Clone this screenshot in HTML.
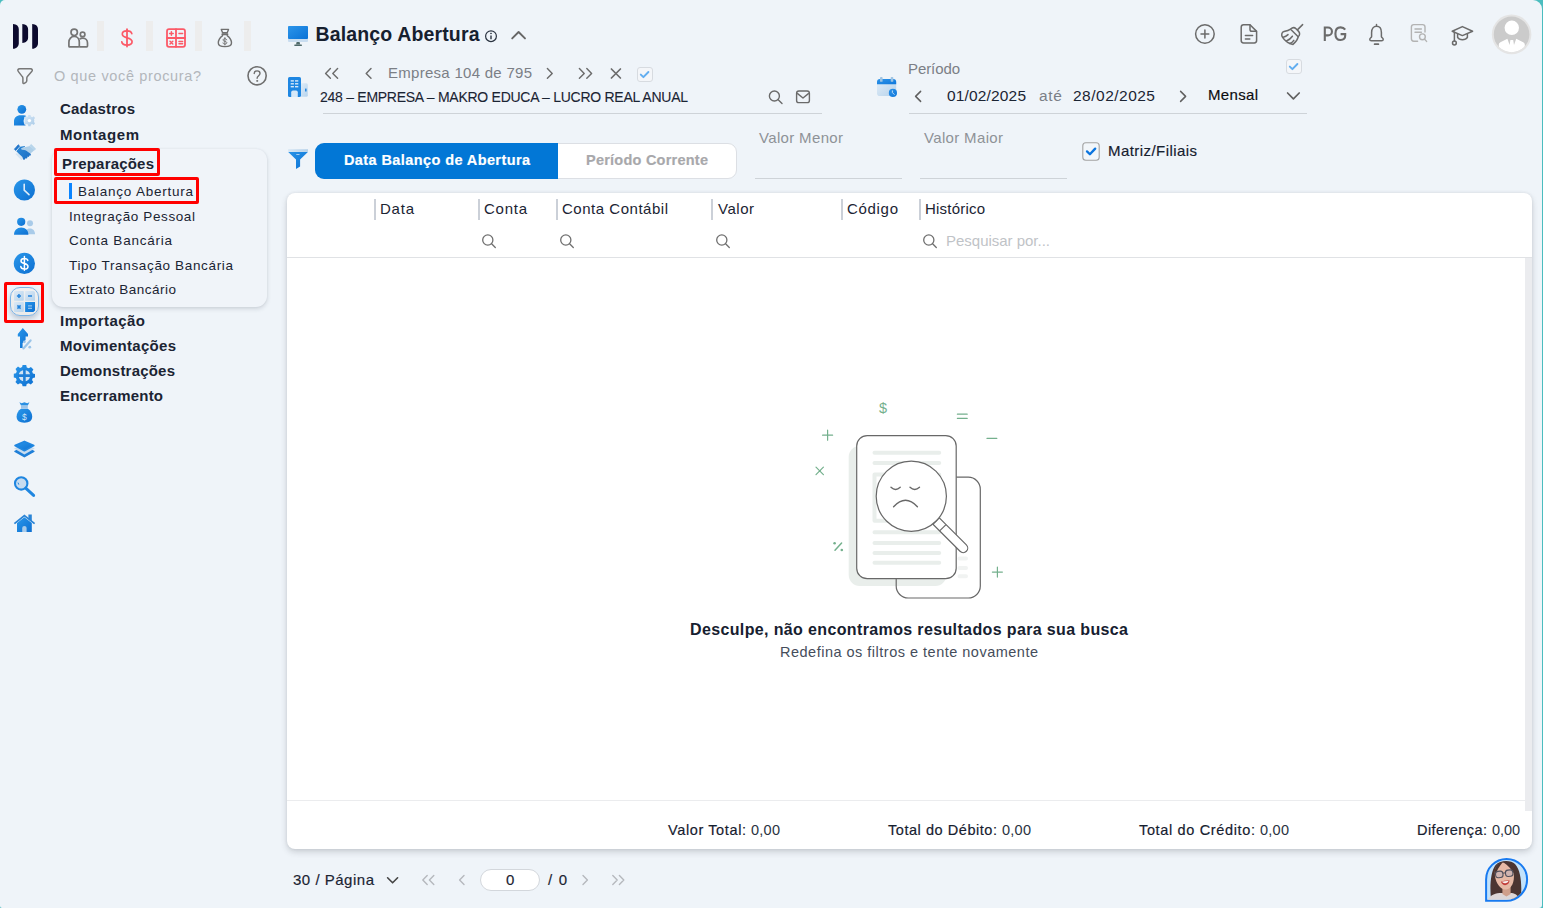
<!DOCTYPE html>
<html lang="pt-BR">
<head>
<meta charset="utf-8">
<title>Balanço Abertura</title>
<style>
*{box-sizing:border-box;margin:0;padding:0}
html,body{width:1543px;height:908px;overflow:hidden}
body{background:#4bbdbf;font-family:"Liberation Sans",sans-serif;color:#1b2433;position:relative}
#app{position:absolute;left:0;top:0;width:1542px;height:908px;background:#eff4f9;border-radius:5px 9px 3px 2px;overflow:hidden}
.a{position:absolute}
.t{position:absolute;white-space:nowrap;line-height:20px;height:20px}
svg{position:absolute;overflow:visible}
.sep{position:absolute;top:21px;width:7px;height:30px;background:#ededed}
.ul{position:absolute;height:1px;background:#ced3d8}
.red{position:absolute;border:3px solid #ff0000;border-radius:2px}
.vb{position:absolute;top:199px;width:2px;height:21px;background:#cbd0d8}
</style>
</head>
<body>
<div id="app">
<!-- top separators -->
<div class="sep" style="left:97px"></div>
<div class="sep" style="left:146px"></div>
<div class="sep" style="left:195px"></div>
<div class="sep" style="left:244px"></div>

<!-- submenu card -->
<div class="a" style="left:52px;top:149px;width:215px;height:157.5px;border-radius:11px;background:#f0f4f9;box-shadow:0 2px 4px rgba(50,60,80,.17),0 0 2px rgba(50,60,80,.08)"></div>
<div class="a" style="left:69px;top:183px;width:3px;height:16px;background:#0a84ff"></div>
<div class="red" style="left:54px;top:148px;width:106px;height:28px"></div>
<div class="red" style="left:54px;top:177px;width:145px;height:27px"></div>

<!-- selected sidebar icon bg + red frame -->
<div class="a" style="left:10px;top:287px;width:29px;height:29px;border-radius:10px;background:linear-gradient(180deg,#f0f1f2,#ebebea);border:1px solid #7db4e6;box-shadow:0 3px 5px rgba(60,80,110,.28)"></div>
<div class="red" style="left:4px;top:282px;width:40px;height:41px"></div>

<!-- underlines -->
<div class="ul" style="left:323px;top:113px;width:499px"></div>
<div class="ul" style="left:909px;top:113px;width:398px"></div>
<div class="ul" style="left:755px;top:178px;width:147px"></div>
<div class="ul" style="left:920px;top:178px;width:147px"></div>

<!-- segmented button -->
<div class="a" style="left:315px;top:143px;width:422px;height:36px;border-radius:9px;background:#fff;border:1px solid #dcdfe4"></div>
<div class="a" style="left:315px;top:143px;width:243px;height:36px;border-radius:9px 0 0 9px;background:#0277d6"></div>

<!-- checkbox matriz -->

<!-- small checkboxes -->
<div class="a" style="left:637px;top:67px;width:16px;height:15px;border-radius:3px;background:#f4f6f9;border:1px solid #d7dbe0"></div>
<div class="a" style="left:1286px;top:59px;width:16px;height:15px;border-radius:3px;background:#f4f6f9;border:1px solid #d7dbe0"></div>

<!-- table card -->
<div class="a" style="left:287px;top:193px;width:1245px;height:656px;border-radius:8px;background:#fff;box-shadow:0 3px 6px rgba(55,60,70,.2),0 0 3px rgba(55,60,70,.1)"></div>
<div class="a" style="left:287px;top:257px;width:1245px;height:1px;background:#e0e2e5"></div>
<div class="a" style="left:287px;top:800px;width:1238px;height:1px;background:#ebecee"></div>
<div class="a" style="left:1525px;top:258px;width:7px;height:553px;background:#ebecef"></div>
<div class="vb" style="left:374px"></div>
<div class="vb" style="left:478px"></div>
<div class="vb" style="left:556px"></div>
<div class="vb" style="left:711px"></div>
<div class="vb" style="left:841px"></div>
<div class="vb" style="left:919px"></div>

<!-- pager input -->
<div class="a" style="left:480px;top:869px;width:60px;height:22px;border-radius:11px;background:#fff;border:1px solid #d3d7dc"></div>
<!-- logo -->
<svg style="left:12px;top:23px" width="28" height="27" viewBox="12 23 28 27">
 <path fill="#0c0a2e" d="M13 23.9 C16.8 24 18.8 26.2 18.8 29.5 V43 C18.8 46.4 16.8 48.6 13 48.8 Z"/>
 <path fill="#0c0a2e" d="M22.3 23.9 C26 24 28.1 26.2 28.1 29.5 V37.5 C28.1 40.6 26 42.8 22.3 43 Z"/>
 <path fill="#0c0a2e" d="M32.2 23.9 C36 24 38 26.2 38 29.5 V43 C38 46.4 36 48.6 32.2 48.8 Z"/>
</svg>
<!-- people outline -->
<svg style="left:67px;top:27px" width="23" height="22" viewBox="67 27 23 22" fill="none" stroke="#757575" stroke-width="1.7" stroke-linejoin="round">
 <circle cx="74.2" cy="32.3" r="3.2"/>
 <path d="M69.1 46.9 H78.4 Q79.3 46.9 79.3 46 V42.2 C79.3 39 77.2 36.4 74.2 36.4 C71.2 36.4 68.9 39 68.9 42.2 V46 Q68.9 46.9 69.1 46.9 Z"/>
 <circle cx="82.6" cy="34.4" r="2.3"/>
 <path d="M79.3 46.9 H86.6 Q87.5 46.9 87.5 46 V43 C87.5 40.2 85.6 38.1 82.8 38.1 C81.5 38.1 80.4 38.5 79.6 39.2"/>
</svg>
<!-- red dollar -->
<svg style="left:118px;top:26px" width="18" height="24" viewBox="118 26 18 24" fill="none" stroke="#fb5a68" stroke-width="1.8" stroke-linecap="round">
 <path d="M127 29.2 V46.6"/>
 <path d="M131.8 33.6 C131.4 31.8 129.7 30.9 127 30.9 C124.2 30.9 122.3 32 122.3 34.1 C122.3 36.4 124.2 37.2 127 37.8 C130 38.5 132.1 39.4 132.1 41.8 C132.1 44 130 45.1 127 45.1 C124.1 45.1 122.1 44 121.8 41.9" stroke-width="1.7"/>
</svg>
<!-- red calc -->
<svg style="left:165px;top:27px" width="22" height="22" viewBox="165 27 22 22" fill="none" stroke="#fb5a68" stroke-width="1.8" stroke-linecap="round">
 <rect x="167" y="29.2" width="18" height="17.6" rx="2"/>
 <path d="M176 29.2 V46.8 M167 38 H185"/>
 <path d="M169.6 33.5 H173.2 M171.4 31.7 V35.3 M179 33.5 H182.6 M170 41.2 L172.8 44 M172.8 41.2 L170 44 M179 41.4 H182.6 M179 43.8 H182.6" stroke-width="1.5"/>
</svg>
<!-- money bag outline -->
<svg style="left:216px;top:27px" width="18" height="22" viewBox="216 27 18 22" fill="none" stroke="#707070" stroke-width="1.4" stroke-linejoin="round" stroke-linecap="round">
 <path d="M221.3 29.4 H228.5 L227.2 32.8 H222.6 Z"/>
 <path d="M222.4 34.2 H227.4" stroke-width="2"/>
 <path d="M222.6 35.6 C219.8 37.6 218.3 40.4 218.3 43 C218.3 45.6 220.2 46.6 224.9 46.6 C229.6 46.6 231.5 45.6 231.5 43 C231.5 40.4 230 37.6 227.2 35.6"/>
 <path d="M224.9 37.6 V45 M226.7 39.8 C226.5 39 225.8 38.7 224.9 38.7 C223.8 38.7 223.1 39.2 223.1 40 C223.1 40.9 223.9 41.1 224.9 41.3 C226 41.6 226.8 41.9 226.8 42.8 C226.8 43.6 226 44.1 224.9 44.1 C223.8 44.1 223.1 43.7 223 42.9" stroke-width="1"/>
</svg>
<!-- funnel -->
<svg style="left:16px;top:67px" width="18" height="18" viewBox="16 67 18 18" fill="none" stroke="#787878" stroke-width="1.5" stroke-linejoin="round">
 <path d="M19.8 68.8 H30.4 C32.4 68.8 32.9 70.2 31.7 71.6 L27.4 76.6 C26.9 77.2 26.8 77.6 26.8 78.4 V80.6 C26.8 81.4 26.5 81.9 25.9 82.3 L24.2 83.3 C23.5 83.7 22.9 83.3 22.9 82.5 V78.4 C22.9 77.6 22.8 77.2 22.3 76.6 L18.4 71.6 C17.3 70.2 17.8 68.8 19.8 68.8 Z"/>
</svg>
<!-- help -->
<svg style="left:246px;top:65px" width="22" height="22" viewBox="246 65 22 22" fill="none" stroke="#6f6f6f" stroke-width="1.6" stroke-linecap="round">
 <circle cx="257.1" cy="75.8" r="9.1"/>
 <path d="M254.2 73.5 C254.2 71.9 255.4 70.9 257.1 70.9 C258.8 70.9 260 71.9 260 73.5 C260 75.6 257.1 75.8 257.1 78.3" stroke-width="1.4"/>
 <circle cx="257.1" cy="80.9" r=".55" fill="#6f6f6f" stroke-width=".8"/>
</svg>
<svg width="0" height="0"><defs>
 <linearGradient id="bl" x1="0" y1="0" x2="1" y2="1"><stop offset="0" stop-color="#2a97ea"/><stop offset="1" stop-color="#0d6fd1"/></linearGradient>
 <linearGradient id="lb" x1="0" y1="0" x2="1" y2="1"><stop offset="0" stop-color="#dbe9f6"/><stop offset="1" stop-color="#a9cbe9"/></linearGradient>
</defs></svg>
<!-- 1 person + gear (cy 116) -->
<svg style="left:12px;top:103px" width="26" height="26" viewBox="12 103 26 26">
 <circle cx="21.8" cy="109.3" r="4.4" fill="url(#bl)"/>
 <path d="M14 125.6 V121.6 C14 117.6 16.6 115.2 20.6 115.2 H23.4 C24.6 115.2 25.6 115.4 26.4 115.9 C24.6 117.4 23.6 119.2 23.6 121 C23.6 122.8 24.4 124.4 25.8 125.6 Z" fill="url(#bl)"/>
 <g transform="translate(29.4 120.6)">
  <path fill="url(#lb)" d="M-1.1 -5.6 H1.1 L1.5 -4 L2.9 -3.4 L4.3 -4.3 L5.6 -2.6 L4.6 -1.3 L4.9 0 L4.6 1.3 L5.6 2.6 L4.3 4.3 L2.9 3.4 L1.5 4 L1.1 5.6 H-1.1 L-1.5 4 L-2.9 3.4 L-4.3 4.3 L-5.6 2.6 L-4.6 1.3 L-4.9 0 L-4.6 -1.3 L-5.6 -2.6 L-4.3 -4.3 L-2.9 -3.4 L-1.5 -4 Z"/>
  <circle r="1.7" fill="#fff"/>
 </g>
</svg>
<!-- 2 handshake (cy 153) -->
<svg style="left:12px;top:143px" width="26" height="20" viewBox="12 143 26 20">
 <defs><linearGradient id="hs" x1="0" y1="0" x2="1" y2="1"><stop offset="0" stop-color="#2f8bd8"/><stop offset="1" stop-color="#1a6cc2"/></linearGradient></defs>
 <path d="M16.4 154 L21.6 159.2 M18.2 153.4 L23 158.2" stroke="#d3e3f1" stroke-width="1.5" stroke-linecap="round"/>
 <path d="M21.4 148 L25.5 146.9 L30 146.1 L34.5 149.9 L31.8 152.6 L30 153.4 L25.5 150.4 L21.4 149.2 Z" fill="#aecfe9"/>
 <path d="M30 145.6 L31.2 144.5 L35.6 148.9 L34.4 150 Z" fill="#b5d3ea" stroke="#b5d3ea" stroke-width=".8" stroke-linejoin="round"/>
 <path d="M14.4 149.2 L18.3 144.8 L19.6 146 L15.7 150.4 Z" fill="#1f74ca" stroke="#1f74ca" stroke-width=".8" stroke-linejoin="round"/>
 <path d="M16.3 151.2 L20 146.7 L24.8 146 L25 146.8 L21.2 148.2 L21.6 149.6 L25.6 150.2 L31 154 L30.4 155.7 L29.4 155.4 L28.9 156.9 L27.7 156.6 L27 158.6 L25.6 158.2 L24.2 160 L23.2 159.6 L22.4 157 Z" fill="url(#hs)"/>
</svg>
<!-- 3 clock (cy 190) -->
<svg style="left:13px;top:179px" width="23" height="23" viewBox="13 179 23 23">
 <circle cx="24.4" cy="190" r="10.6" fill="url(#bl)"/>
 <path d="M24.2 184.2 V190.2 L29 194.6" fill="none" stroke="#dcebf8" stroke-width="1.6" stroke-linecap="round" stroke-linejoin="round"/>
</svg>
<!-- 4 users (cy 227) -->
<svg style="left:12px;top:216px" width="26" height="22" viewBox="12 216 26 22">
 <circle cx="30" cy="223.2" r="3" fill="#a9cbe9"/>
 <path d="M26.4 234.2 H35 C35 230.6 33 228.4 30 228.4 C28.6 228.4 27.4 228.8 26.6 229.6 Z" fill="#a9cbe9"/>
 <circle cx="21.2" cy="221.8" r="4.1" fill="url(#bl)"/>
 <path d="M14 234.8 C14 230.2 17 227.4 21.2 227.4 C25.4 227.4 28.4 230.2 28.4 234.8 Z" fill="url(#bl)"/>
</svg>
<!-- 5 dollar circle (cy 263.5) -->
<svg style="left:13px;top:252px" width="23" height="23" viewBox="13 252 23 23">
 <circle cx="24.4" cy="263.4" r="10.6" fill="url(#bl)"/>
 <path d="M24.4 256.6 V270.2 M27.8 260.4 C27.5 259 26.2 258.4 24.4 258.4 C22.4 258.4 21 259.3 21 260.9 C21 262.6 22.4 263.1 24.4 263.5 C26.5 264 28 264.7 28 266.4 C28 268.1 26.5 269 24.4 269 C22.4 269 21 268.2 20.8 266.6" fill="none" stroke="#fff" stroke-width="1.5" stroke-linecap="round"/>
</svg>
<!-- 6 calc (cy 301.5) -->
<svg style="left:13px;top:290px" width="23" height="23" viewBox="13 290 23 23">
 <defs><linearGradient id="cl" x1="0" y1="0" x2="1" y2="1"><stop offset="0" stop-color="#dde9f5"/><stop offset="1" stop-color="#b5d3ec"/></linearGradient></defs>
 <rect x="14" y="291" width="9.8" height="9.7" rx=".8" fill="url(#cl)"/>
 <path d="M25.1 291 H33 Q35 291 35 293 V300.7 H25.1 Z" fill="url(#cl)"/>
 <rect x="14" y="302" width="9.8" height="10" rx=".8" fill="url(#cl)"/>
 <path d="M25.1 302 H35 V310.4 L33.4 312 H25.1 Z" fill="url(#bl)"/>
 <path d="M16.9 296 H21 M18.95 294 V298 M28 296 H32 M17.4 305.4 L20.6 308.6 M20.6 305.4 L17.4 308.6" stroke="#2584dc" stroke-width="1.5" fill="none"/>
 <path d="M28 305.8 H32 M28 308.3 H32" stroke="#8fc0ec" stroke-width="1.3" fill="none"/>
</svg>
<!-- 7 arrow percent (cy 339) -->
<svg style="left:15px;top:327px" width="18" height="23" viewBox="15 327 18 23">
 <path d="M22.8 328 L28 334 L28 336.4 L25.6 336.4 L25.6 340 L22.6 343 L22.6 348 H20 V336.4 H17.8 V334 Z" fill="url(#bl)"/>
 <path d="M30.6 340.4 L23.4 348.4" stroke="#9cc5e9" stroke-width="2.2" stroke-linecap="round"/>
 <circle cx="24.4" cy="341.8" r="1.4" fill="#9cc5e9"/><circle cx="29.8" cy="347.2" r="1.4" fill="#9cc5e9"/>
</svg>
<!-- 8 gear plus (cy 376) -->
<svg style="left:13px;top:364px" width="23" height="23" viewBox="13 364 23 23">
 <g transform="translate(24.4 375.6)">
  <path fill="url(#bl)" d="M-1.8 -10.6 H1.8 L2.4 -8.2 L4.4 -7.4 L6.5 -8.7 L9 -6.2 L7.7 -4.1 L8.5 -2.1 L10.6 -1.6 V1.8 L8.4 2.4 L7.6 4.4 L8.9 6.5 L6.4 9 L4.3 7.7 L2.3 8.5 L1.8 10.6 H-1.8 L-2.4 8.4 L-4.4 7.6 L-6.5 8.9 L-9 6.4 L-7.7 4.3 L-8.5 2.3 L-10.6 1.8 V-1.8 L-8.4 -2.4 L-7.6 -4.4 L-8.9 -6.5 L-6.4 -9 L-4.3 -7.7 L-2.3 -8.5 Z"/>
  <circle r="5.7" fill="#d2e3f3"/>
  <path d="M0 -6.4 V6.4 M-6.4 0 H6.4" stroke="#1f7fd8" stroke-width="2.6"/>
 </g>
</svg>
<!-- 9 money bag (cy 412) -->
<svg style="left:15px;top:401px" width="19" height="23" viewBox="15 400 19 23">
 <path d="M19.4 401.2 L21.6 402.2 L24.4 401.2 L27.2 402.2 L29.4 401.2 L27.8 404.6 H21 Z" fill="#2a8fe2"/>
 <rect x="21" y="405" width="6.8" height="2.4" fill="#9ec4e8"/>
 <path d="M21 407.8 H27.8 C30.6 409.6 32.2 412.6 32.2 415.6 C32.2 419.8 29.4 421.8 24.4 421.8 C19.4 421.8 16.6 419.8 16.6 415.6 C16.6 412.6 18.2 409.6 21 407.8 Z" fill="url(#bl)"/>
 <text x="24.4" y="418.6" font-size="8.5" text-anchor="middle" fill="#cfe4f7" font-family="Liberation Sans, sans-serif">$</text>
</svg>
<!-- 10 layers (cy 449) -->
<svg style="left:13px;top:439px" width="23" height="20" viewBox="13 439 23 20">
 <path d="M15 451.4 L24.4 447.2 L33.8 451.4 L24.4 456.6 Z" fill="#1f7fd8" stroke="#1f7fd8" stroke-width="1.6" stroke-linejoin="round"/>
 <path d="M14 448.6 L24.4 443.8 L34.8 448.6 L24.4 454.6 Z" fill="#c8dcef"/>
 <path d="M15 445.6 L24.4 441.4 L33.8 445.6 L24.4 450.8 Z" fill="url(#bl)" stroke="#1f86e0" stroke-width="1.6" stroke-linejoin="round"/>
</svg>
<!-- 11 search (cy 486) -->
<svg style="left:13px;top:475px" width="23" height="23" viewBox="13 475 23 23">
 <circle cx="21.2" cy="483.4" r="6.2" fill="#c8dcef" stroke="#1f86e0" stroke-width="2.1"/>
 <path d="M26 488.4 L33.6 495.4" stroke="#1f86e0" stroke-width="3" stroke-linecap="round"/>
 <path d="M18 482.6 L18.8 484.6" stroke="#1f86e0" stroke-width="1"/>
</svg>
<!-- 12 home (cy 523) -->
<svg style="left:13px;top:513px" width="23" height="20" viewBox="13 513 23 20">
 <path d="M17 523 L24.4 517.2 L31.8 523 V532 H17 Z" fill="url(#bl)"/>
 <path d="M28.4 514.6 H31.8 V521.4 L28.4 518.8 Z" fill="#2a84d6"/><path d="M14.4 523.6 L24.4 515.6 L34.6 523.6" fill="none" stroke="#2a84d6" stroke-width="1.8" stroke-linejoin="miter"/>
 <path d="M22.2 532 V528 Q22.2 526 24.4 526 Q26.6 526 26.6 528 V532 Z" fill="#a9cbe9"/>
</svg>
<!-- monitor icon -->
<svg style="left:287px;top:25px" width="22" height="22" viewBox="287 25 22 22">
 <defs><linearGradient id="mn" x1="0" y1="0" x2="1" y2="1"><stop offset="0" stop-color="#2c95ea"/><stop offset="1" stop-color="#0a72d6"/></linearGradient></defs>
 <path d="M296.6 42 H299.6 L300.2 44.6 H296 Z" fill="#506a6a"/>
 <rect x="294.2" y="44.4" width="7.8" height="1.5" rx=".7" fill="#506a6a"/>
 <rect x="288" y="26" width="20" height="16" rx="1" fill="#c9ddf0"/>
 <rect x="288" y="26" width="20" height="13" rx="1" fill="url(#mn)"/>
</svg>
<!-- info i -->
<svg style="left:484px;top:29px" width="14" height="14" viewBox="484 29 14 14" fill="none" stroke="#2a3340" stroke-width="1.2">
 <circle cx="491" cy="36.2" r="5.4"/>
 <path d="M491 35.4 V39.2" stroke-width="1.4"/><circle cx="491" cy="33.4" r=".5" fill="#2a3340" stroke-width=".7"/>
</svg>
<!-- chevron up -->
<svg style="left:510px;top:29px" width="18" height="12" viewBox="510 29 18 12" fill="none" stroke="#666" stroke-width="1.9" stroke-linecap="round" stroke-linejoin="round">
 <path d="M512.2 38.4 L518.6 32 L525 38.4"/>
</svg>
<!-- building icon -->
<svg style="left:287px;top:75px" width="22" height="24" viewBox="287 75 22 24">
 <defs><linearGradient id="sb" x1="0" y1="0" x2="1" y2="1"><stop offset="0" stop-color="#e3eef8"/><stop offset="1" stop-color="#b4d2ed"/></linearGradient></defs><rect x="300" y="83.2" width="7.8" height="13.6" rx="1.5" fill="url(#sb)"/>
 <rect x="305" y="88.6" width="1.6" height="3" rx=".5" fill="#2b8ae0"/>
 <rect x="288" y="77" width="13" height="20" rx="1.6" fill="#1e86e2"/>
 <g fill="#d6e8f8"><rect x="290.7" y="80.2" width="3.2" height="1.4"/><rect x="295" y="80.2" width="3.3" height="1.4"/>
 <rect x="290.7" y="83.1" width="3.2" height="1.4"/><rect x="295" y="83.1" width="3.3" height="1.4"/>
 <rect x="290.7" y="86" width="3.2" height="1.4"/><rect x="295" y="86" width="3.3" height="1.4"/>
 <path d="M291.2 97 V92.2 Q291.2 90.4 293 90.4 H296 Q297.8 90.4 297.8 92.2 V97 Z"/></g>
</svg>
<!-- nav chevrons row y=73 -->
<svg style="left:320px;top:66px" width="310" height="15" viewBox="320 66 310 15" fill="none" stroke="#6c6c6c" stroke-width="1.45" stroke-linecap="round" stroke-linejoin="round">
 <path d="M330.4 68.6 L325.6 73.4 L330.4 78.2 M337.6 68.6 L332.8 73.4 L337.6 78.2"/>
 <path d="M371 68.6 L366.2 73.4 L371 78.2"/>
 <path d="M547.4 68.6 L552.2 73.4 L547.4 78.2"/>
 <path d="M579.4 68.6 L584.2 73.4 L579.4 78.2 M586.8 68.6 L591.6 73.4 L586.8 78.2"/>
 <path d="M611.4 69 L620.4 78 M620.4 69 L611.4 78" stroke-width="1.7"/>
</svg>
<!-- check in small checkbox 1 -->
<svg style="left:637px;top:67px" width="15" height="15" viewBox="0 0 15 15" fill="none" stroke="#62aef0" stroke-width="1.9" stroke-linecap="round" stroke-linejoin="round"><path d="M3.8 7.6 L6.4 10.2 L11.4 5"/></svg>
<svg style="left:1286px;top:59px" width="15" height="15" viewBox="0 0 15 15" fill="none" stroke="#62aef0" stroke-width="1.9" stroke-linecap="round" stroke-linejoin="round"><path d="M3.8 7.6 L6.4 10.2 L11.4 5"/></svg>
<!-- search + mail in company field -->
<svg style="left:766px;top:88px" width="48" height="18" viewBox="766 88 48 18" fill="none" stroke="#6a6a6a" stroke-width="1.4" stroke-linecap="round" stroke-linejoin="round">
 <circle cx="774.4" cy="96" r="5"/><path d="M778.2 99.8 L782 103.4"/>
 <rect x="796.6" y="91" width="12.8" height="11.6" rx="2.2"/><path d="M797.6 93.6 L803 98 L808.4 93.6"/>
</svg>
<!-- calendar icon -->
<svg style="left:875px;top:75px" width="24" height="24" viewBox="875 75 24 24">
 <defs><linearGradient id="cg" x1="0" y1="0" x2="1" y2="1"><stop offset="0" stop-color="#e4eef8"/><stop offset="1" stop-color="#b5d2eb"/></linearGradient>
 <linearGradient id="ch" x1="0" y1="0" x2="1" y2="1"><stop offset="0" stop-color="#2e93e8"/><stop offset="1" stop-color="#0f78dc"/></linearGradient></defs>
 <rect x="877" y="79" width="19.2" height="17" rx="2.8" fill="url(#cg)"/>
 <path d="M877 84.2 V82 Q877 79 880 79 H893.2 Q896.2 79 896.2 82 V84.2 Z" fill="url(#ch)"/>
 <rect x="880" y="76.9" width="2.6" height="4.9" rx=".9" fill="#9dc3e3"/><rect x="890.7" y="76.9" width="2.6" height="4.9" rx=".9" fill="#9dc3e3"/>
 <circle cx="892.9" cy="92.9" r="4.1" fill="url(#ch)"/>
 <path d="M892.4 90.8 V92.6 L894.2 94.4" fill="none" stroke="#cfe3f6" stroke-width=".9" stroke-linecap="round"/>
</svg>
<!-- period chevrons -->
<svg style="left:910px;top:88px" width="392" height="16" viewBox="910 88 392 16" fill="none" stroke="#606060" stroke-width="1.5" stroke-linecap="round" stroke-linejoin="round">
 <path d="M920.6 91.4 L915.6 96.4 L920.6 101.4"/>
 <path d="M1180.6 91.4 L1185.6 96.4 L1180.6 101.4"/>
 <path d="M1287.6 93 L1293.4 98.8 L1299.2 93" stroke-width="1.7"/>
</svg>
<!-- plus circle -->
<svg style="left:1193px;top:23px" width="24" height="24" viewBox="1193 23 24 24" fill="none" stroke="#6b6b6b" stroke-width="1.5" stroke-linecap="round">
 <circle cx="1204.9" cy="34" r="9.3"/><path d="M1201 34 H1208.8 M1204.9 30.1 V37.9"/>
</svg>
<!-- doc -->
<svg style="left:1238px;top:23px" width="22" height="24" viewBox="1238 23 22 24" fill="none" stroke="#6b6b6b" stroke-width="1.5" stroke-linecap="round" stroke-linejoin="round">
 <path d="M1243.6 24.8 H1250 L1256.6 31.4 V40.6 Q1256.6 43 1254.2 43 H1243.6 Q1241.2 43 1241.2 40.6 V27.2 Q1241.2 24.8 1243.6 24.8 Z"/>
 <path d="M1250 25 V29.4 Q1250 31.2 1251.8 31.2 H1256.4"/>
 <path d="M1245.4 35.6 H1252.6 M1245.4 39 H1249.8"/>
</svg>
<!-- broom -->
<svg style="left:1279px;top:22px" width="26" height="26" viewBox="1279 22 26 26" fill="none" stroke="#6b6b6b" stroke-width="1.5" stroke-linecap="round" stroke-linejoin="round">
 <path d="M1297.6 29.6 L1302.6 24.6"/>
 <path d="M1290.6 29.2 C1292.4 27.4 1294.6 27.4 1296 28.8 L1298.6 31.4 C1300 32.8 1300 35 1298.2 36.8 Z"/>
 <path d="M1290.6 29.2 C1288.6 30.6 1286 31.2 1284 31.6 C1281.6 32.2 1281 35 1282.6 37.4 C1285 41 1288.6 43.6 1293 44.4 C1295.4 42.4 1297.6 39.6 1298.2 36.8"/>
 <path d="M1283.2 37.2 C1285 36.8 1286.8 35.8 1288 34.6 M1286.4 41 C1289 40 1291 38.2 1292.4 36.2 M1290 43.4 C1291.6 42.8 1293 41.6 1293.8 40.4"/>
</svg>
<!-- PG -->
<svg style="left:1320px;top:24px" width="30" height="20" viewBox="1320 24 30 20" fill="none" stroke="#6b6b6b" stroke-width="2.1" stroke-linejoin="miter">
 <path d="M1324.8 41 V27.5 H1328 A3.95 3.95 0 0 1 1328 35.4 H1324.8"/>
 <path d="M1345.2 29.6 C1344.2 28.2 1342.6 27.4 1340.6 27.4 C1337.4 27.4 1335.4 29.8 1335.4 33.7 C1335.4 37.6 1337.4 40 1340.6 40 C1343.6 40 1345.2 38.4 1345.2 35.6 V34.1 H1340.6"/>
</svg>
<!-- bell -->
<svg style="left:1365px;top:22px" width="24" height="26" viewBox="1365 22 24 26" fill="none" stroke="#6b6b6b" stroke-width="1.5" stroke-linecap="round" stroke-linejoin="round">
 <path d="M1376.5 24.6 V26 M1371.6 32.4 C1371.6 28.6 1373.6 26.2 1376.5 26.2 C1379.4 26.2 1381.4 28.6 1381.4 32.4 V36.4 C1381.4 37.6 1383.2 38 1383.2 39.4 Q1383.2 40.8 1381.6 40.8 H1371.4 Q1369.8 40.8 1369.8 39.4 C1369.8 38 1371.6 37.6 1371.6 36.4 Z"/>
 <path d="M1374.6 44.2 H1378.4" stroke-width="1.7"/>
</svg>
<!-- doc search (light) -->
<svg style="left:1408px;top:22px" width="22" height="24" viewBox="1408 22 22 24" fill="none" stroke="#b3b3b3" stroke-width="1.4" stroke-linecap="round" stroke-linejoin="round">
 <path d="M1417.6 41.2 H1413.8 Q1411.4 41.2 1411.4 38.8 V27 Q1411.4 24.6 1413.8 24.6 H1422.6 Q1425 24.6 1425 27 V32"/>
 <path d="M1415 29 H1421.4 M1415 32.2 H1421.4"/>
 <circle cx="1422.4" cy="36.8" r="2.9"/><path d="M1424.6 39.2 L1426.6 41.4"/>
</svg>
<!-- grad cap -->
<svg style="left:1449px;top:23px" width="26" height="24" viewBox="1449 23 26 24" fill="none" stroke="#6b6b6b" stroke-width="1.5" stroke-linecap="round" stroke-linejoin="round">
 <path d="M1452.2 31.2 L1462.4 26.6 L1472.6 31.2 L1462.4 35.6 Z"/>
 <path d="M1457.6 34 V37.4 C1458.6 39 1460.4 39.8 1462.4 39.8 C1464.4 39.8 1466.4 39 1467.4 37.4 V34"/>
 <path d="M1454.4 32.2 V41"/><circle cx="1454.4" cy="43" r="1.9"/>
</svg>
<!-- user avatar grey -->
<svg style="left:1491px;top:14px" width="42" height="42" viewBox="1491 14 42 42">
 <defs><clipPath id="uc"><circle cx="1511.6" cy="34.4" r="17.8"/></clipPath></defs>
 <circle cx="1511.6" cy="34.4" r="19.8" fill="#e4e4e4"/>
 <circle cx="1511.6" cy="34.4" r="17.8" fill="#cbcbcb"/>
 <g clip-path="url(#uc)" fill="#fff">
  <circle cx="1511.8" cy="27.8" r="7.2"/>
  <path d="M1498.8 53 V44.6 Q1498.8 43 1500.4 42.2 L1507.4 38.8 L1509.6 45 L1510.4 40 H1513.2 L1514 45 L1516.2 38.8 L1523.2 42.2 Q1524.8 43 1524.8 44.6 V53 Z"/>
 </g>
</svg>
<!-- funnel blue -->
<svg style="left:287px;top:148px" width="22" height="24" viewBox="287 148 22 24">
 <defs><linearGradient id="fb" x1="0" y1="0" x2="1" y2="0"><stop offset="0" stop-color="#d9e7f4"/><stop offset="1" stop-color="#b3d0e9"/></linearGradient>
 <linearGradient id="fd" x1="0" y1="0" x2="1" y2="1"><stop offset="0" stop-color="#2a93e6"/><stop offset="1" stop-color="#0b73d6"/></linearGradient></defs>
 <path d="M288.1 149.2 H308 V151.9 H288.1 Z" fill="url(#fb)"/>
 <path d="M288.2 152.1 H307.9 L300.1 159.6 V166.5 L296 168.9 V159.6 Z" fill="url(#fd)"/>
 <rect x="296.2" y="153.9" width="3.4" height=".9" rx=".4" fill="#cfe3f6"/>
</svg>
<!-- matriz check -->
<svg style="left:1081px;top:141px" width="20" height="21" viewBox="1081 141 20 21" fill="none" stroke-linecap="round" stroke-linejoin="round">
 <rect x="1082.8" y="142.8" width="16.4" height="17.4" rx="3" fill="#f2f6fa" stroke="#a3a3a3" stroke-width="1.1"/>
 <path d="M1087 151.4 L1089.9 154.3 L1095.2 148.6" stroke="#0b74de" stroke-width="2.3"/>
</svg>
<!-- table search icons -->
<svg style="left:480px;top:232px" width="460" height="18" viewBox="480 232 460 18" fill="none" stroke="#6f6f6f" stroke-width="1.3" stroke-linecap="round">
 <circle cx="487.8" cy="240" r="5.1"/><path d="M491.6 243.8 L495.3 247.5"/>
 <circle cx="565.8" cy="240" r="5.1"/><path d="M569.6 243.8 L573.3 247.5"/>
 <circle cx="721.8" cy="240" r="5.1"/><path d="M725.6 243.8 L729.3 247.5"/>
 <circle cx="928.8" cy="240" r="5.1"/><path d="M932.6 243.8 L936.3 247.5"/>
</svg>
<!-- pager -->
<svg style="left:384px;top:872px" width="250" height="16" viewBox="384 872 250 16" fill="none" stroke-width="1.4" stroke-linecap="round" stroke-linejoin="round">
 <path d="M387.6 877.8 L392.6 882.8 L397.6 877.8" stroke="#444" stroke-width="1.6"/>
 <g stroke="#b5b8bd"><path d="M427.2 875.6 L422.8 880 L427.2 884.4 M433.8 875.6 L429.4 880 L433.8 884.4"/>
 <path d="M464 875.6 L459.6 880 L464 884.4"/>
 <path d="M583 875.6 L587.4 880 L583 884.4"/>
 <path d="M612.8 875.6 L617.2 880 L612.8 884.4 M619.4 875.6 L623.8 880 L619.4 884.4"/></g>
</svg>
<!-- empty state illustration -->
<svg style="left:800px;top:395px" width="220" height="215" viewBox="800 395 220 215" fill="none">
 <path d="M956.2 477.2 H968.3 A12 12 0 0 1 980.3 489.2 V586 A12 12 0 0 1 968.3 598 H908.2 A12 12 0 0 1 896.2 586 V578.7 Z" fill="#fff"/>
 <rect x="848.7" y="446" width="97.7" height="140" rx="11" fill="#e9eeeb"/>
 <path d="M956.2 477.2 H968.3 A12 12 0 0 1 980.3 489.2 V586 A12 12 0 0 1 968.3 598 H908.2 A12 12 0 0 1 896.2 586 V578.7" stroke="#686868" stroke-width="1.2"/>
 <g stroke="#f1f3f2" stroke-width="4" stroke-linecap="round"><path d="M959.5 558.4 H966 M959.5 568 H966 M959.5 576.2 H966"/></g>
 <rect x="856.7" y="435.6" width="99.5" height="143.1" rx="10.5" fill="#fff" stroke="#686868" stroke-width="1.2"/>
 <g stroke="#e9eeeb" stroke-width="4" stroke-linecap="round">
  <path d="M874.5 452.7 H939.2 M874.5 463 H939.2 M874.5 532.2 H939.2 M874.5 543 H939.2 M874.5 553 H939.2 M874.5 562.8 H939.2"/>
  <rect x="874.5" y="474.5" width="64.7" height="46.2" stroke-linejoin="round"/>
 </g>
 <!-- handle -->
 <g transform="translate(911.3 496.2) rotate(45)">
  <path d="M35.1 -4.5 H73.4 A4.5 4.5 0 0 1 73.4 4.5 H35.1 Z" fill="#fff" stroke="#686868" stroke-width="1.2"/>
  <path d="M44.6 -4.5 V4.5" stroke="#686868" stroke-width="1.2"/>
 </g>
 <circle cx="911.3" cy="496.2" r="35.1" fill="#fff" stroke="#686868" stroke-width="1.2"/>
 <g stroke="#686868" stroke-width="1.4" stroke-linecap="round">
  <path d="M891 487.2 Q895.6 491.6 900.2 487.2"/>
  <path d="M910 487.2 Q914.7 491.6 919.5 487.2"/>
  <path d="M893.6 506.8 Q905.5 493.8 917.4 506.8"/>
 </g>
 <!-- green symbols -->
 <g stroke="#74b08d" stroke-width="1.2" stroke-linecap="round">
  <path d="M822.6 435.2 H832.6 M827.6 430.2 V440.2"/>
  <path d="M992.4 572.1 H1002.4 M997.4 567.1 V577.1"/>
  <path d="M816 467.2 L823.4 474.6 M823.4 467.2 L816 474.6"/>
  <path d="M957.4 414.2 H967.2 M957.4 418.4 H967.2"/>
  <path d="M987 438.4 H996.8"/>
  <path d="M835 550.2 L841.6 543" stroke-width="1.5"/>
 </g>
 <circle cx="834.6" cy="543.2" r="1.3" fill="#74b08d"/><circle cx="841.8" cy="550" r="1.3" fill="#74b08d"/>
 <text x="883" y="413" font-size="14.5" font-weight="400" text-anchor="middle" fill="#74b08d" font-family="Liberation Sans, sans-serif">$</text>
</svg>
<!-- assistant avatar -->
<svg style="left:1483px;top:856px" width="47" height="47" viewBox="1483 856 47 47">
 <defs><clipPath id="av"><path d="M1487.1 899.8 V879.4 A19.5 19.5 0 0 1 1526.1 879.4 A19.5 20.4 0 0 1 1506.6 899.8 Z"/></clipPath></defs>
 <path d="M1486.1 900.8 V879.4 A20.5 20.5 0 0 1 1527.1 879.4 A20.5 21.4 0 0 1 1506.6 900.8 Z" fill="#c2e2fb" stroke="#187af0" stroke-width="2"/>
 <g clip-path="url(#av)">
  <path d="M1491 899 C1489.6 887 1490.6 871 1495.6 865 C1499.6 860 1511 859.6 1515 864 C1520.6 870 1521.6 882 1521.2 892 L1519.4 899 Z" fill="#4b3531"/>
  <path d="M1487.6 901 C1488.6 896.4 1493 893.6 1499.6 893 L1511.6 893 C1516 893.6 1518.6 896 1519.6 901 Z" fill="#dcd6d6"/>
  <path d="M1502.4 885 H1510.6 V894 L1506.4 896.6 L1502.4 894 Z" fill="#cf9f8a"/>
  <g transform="rotate(-7 1504.5 876)">
   <path d="M1495 874.6 C1495 866.4 1499 862.4 1504.6 862.4 C1510.2 862.4 1514 866.4 1514 874.6 C1514 883 1510 889.6 1504.6 889.6 C1499.4 889.6 1495 883 1495 874.6 Z" fill="#e6b9a5"/>
   <path d="M1494.6 875 C1495 866.6 1498.6 862 1504.6 861.8 C1500.6 865.6 1497.6 869.6 1494.6 875 Z" fill="#4b3531"/>
   <path d="M1504.6 861.8 C1510.6 862 1514.4 866.6 1514.6 875.6 C1512.6 870.6 1509.6 866 1504.6 861.8 Z" fill="#4b3531"/>
   <rect x="1495.8" y="870.6" width="7.4" height="6.4" rx="2.6" fill="#c7b3b4" fill-opacity=".75" stroke="#50505c" stroke-width="1.1"/>
   <rect x="1505.8" y="870.6" width="7.4" height="6.4" rx="2.6" fill="#c7b3b4" fill-opacity=".75" stroke="#50505c" stroke-width="1.1"/>
   <path d="M1503.2 873 H1505.8" stroke="#50505c" stroke-width="1"/>
   <path d="M1500.2 881.2 Q1504.6 880.2 1509 881.2 Q1507.8 885.2 1504.6 885.2 Q1501.4 885.2 1500.2 881.2 Z" fill="#c23c38"/>
   <path d="M1501.2 881.5 Q1504.6 880.8 1508 881.5 Q1507 883.2 1504.6 883.2 Q1502.2 883.2 1501.2 881.5 Z" fill="#f7f2f0"/>
  </g>
 </g>
</svg>
<!-- texts -->
<div class="t" id="t0" style="left:54px;top:66px;font-size:14.5px;font-weight:400;color:#b3b7bc;letter-spacing:0.643px">O que você procura?</div>
<div class="t" id="t1" style="left:60px;top:99px;font-size:15px;font-weight:700;color:#1b2433;letter-spacing:0.205px">Cadastros</div>
<div class="t" id="t2" style="left:60px;top:125px;font-size:15px;font-weight:700;color:#1b2433;letter-spacing:0.571px">Montagem</div>
<div class="t" id="t3" style="left:62px;top:154px;font-size:15px;font-weight:700;color:#1b2433;letter-spacing:0.194px">Preparações</div>
<div class="t" id="t4" style="left:78px;top:182px;font-size:13.5px;font-weight:400;color:#1b2433;letter-spacing:0.761px">Balanço Abertura</div>
<div class="t" id="t5" style="left:69px;top:207px;font-size:13.5px;font-weight:400;color:#1b2433;letter-spacing:0.613px">Integração Pessoal</div>
<div class="t" id="t6" style="left:69px;top:231px;font-size:13.5px;font-weight:400;color:#1b2433;letter-spacing:0.764px">Conta Bancária</div>
<div class="t" id="t7" style="left:69px;top:256px;font-size:13.5px;font-weight:400;color:#1b2433;letter-spacing:0.655px">Tipo Transação Bancária</div>
<div class="t" id="t8" style="left:69px;top:280px;font-size:13.5px;font-weight:400;color:#1b2433;letter-spacing:0.479px">Extrato Bancário</div>
<div class="t" id="t9" style="left:60px;top:311px;font-size:15px;font-weight:700;color:#1b2433;letter-spacing:0.460px">Importação</div>
<div class="t" id="t10" style="left:60px;top:336px;font-size:15px;font-weight:700;color:#1b2433;letter-spacing:0.288px">Movimentações</div>
<div class="t" id="t11" style="left:60px;top:361px;font-size:15px;font-weight:700;color:#1b2433;letter-spacing:0.204px">Demonstrações</div>
<div class="t" id="t12" style="left:60px;top:386px;font-size:15px;font-weight:700;color:#1b2433;letter-spacing:0.193px">Encerramento</div>
<div class="t" id="t13" style="left:315.5px;top:24px;font-size:19.5px;font-weight:700;color:#16202f;letter-spacing:0.145px">Balanço Abertura</div>
<div class="t" id="t14" style="left:388px;top:63px;font-size:15px;font-weight:400;color:#7b7f86;letter-spacing:0.278px">Empresa 104 de 795</div>
<div class="t" id="t15" style="left:320px;top:87px;font-size:14px;font-weight:400;color:#1b2433;letter-spacing:-0.266px;-webkit-text-stroke:0.1px">248 – EMPRESA – MAKRO EDUCA – LUCRO REAL ANUAL</div>
<div class="t" id="t16" style="left:908px;top:59px;font-size:15px;font-weight:400;color:#7b7f86;letter-spacing:-0.091px">Período</div>
<div class="t" id="t17" style="left:947px;top:86px;font-size:15.5px;font-weight:400;color:#1b2433;letter-spacing:0.158px">01/02/2025</div>
<div class="t" id="t18" style="left:1039px;top:86px;font-size:15.5px;font-weight:400;color:#7b7f86;letter-spacing:0.719px">até</div>
<div class="t" id="t19" style="left:1073px;top:86px;font-size:15.5px;font-weight:400;color:#1b2433;letter-spacing:0.491px">28/02/2025</div>
<div class="t" id="t20" style="left:1208px;top:85px;font-size:15px;font-weight:400;color:#0c0c10;letter-spacing:0.328px;-webkit-text-stroke:0.17px">Mensal</div>
<div class="t" id="t21" style="left:344px;top:150px;font-size:14.5px;font-weight:700;color:#fff;letter-spacing:0.403px;-webkit-text-stroke:0.17px">Data Balanço de Abertura</div>
<div class="t" id="t22" style="left:586px;top:150px;font-size:14.5px;font-weight:700;color:#a8a8ab;letter-spacing:0.237px;-webkit-text-stroke:0.17px">Período Corrente</div>
<div class="t" id="t23" style="left:759px;top:128px;font-size:15px;font-weight:400;color:#8e9297;letter-spacing:0.341px">Valor Menor</div>
<div class="t" id="t24" style="left:924px;top:128px;font-size:15px;font-weight:400;color:#8e9297;letter-spacing:0.341px">Valor Maior</div>
<div class="t" id="t25" style="left:1108px;top:141px;font-size:15px;font-weight:400;color:#16202f;letter-spacing:0.435px;-webkit-text-stroke:0.17px">Matriz/Filiais</div>
<div class="t" id="t26" style="left:380px;top:199px;font-size:15px;font-weight:400;color:#1b2433;letter-spacing:0.771px">Data</div>
<div class="t" id="t27" style="left:484px;top:199px;font-size:15px;font-weight:400;color:#1b2433;letter-spacing:0.742px">Conta</div>
<div class="t" id="t28" style="left:562px;top:199px;font-size:15px;font-weight:400;color:#1b2433;letter-spacing:0.520px">Conta Contábil</div>
<div class="t" id="t29" style="left:718px;top:199px;font-size:15px;font-weight:400;color:#1b2433;letter-spacing:0.523px">Valor</div>
<div class="t" id="t30" style="left:847px;top:199px;font-size:15px;font-weight:400;color:#1b2433;letter-spacing:0.691px">Código</div>
<div class="t" id="t31" style="left:925px;top:199px;font-size:15px;font-weight:400;color:#1b2433;letter-spacing:0.205px">Histórico</div>
<div class="t" id="t32" style="left:946px;top:231px;font-size:15px;font-weight:400;color:#bfc3c7;letter-spacing:-0.016px">Pesquisar por...</div>
<div class="t" id="t33" style="left:690px;top:620px;font-size:16px;font-weight:700;color:#16202f;letter-spacing:0.366px">Desculpe, não encontramos resultados para sua busca</div>
<div class="t" id="t34" style="left:780px;top:642px;font-size:14.5px;font-weight:400;color:#454d5b;letter-spacing:0.494px">Redefina os filtros e tente novamente</div>
<div class="t" id="t35" style="left:668px;top:820px;font-size:14.5px;font-weight:400;color:#16202f;letter-spacing:0.618px;-webkit-text-stroke:0.17px">Valor Total:</div>
<div class="t" id="t36" style="left:751px;top:820px;font-size:14.5px;font-weight:400;color:#2a3342;letter-spacing:0.255px">0,00</div>
<div class="t" id="t37" style="left:888px;top:820px;font-size:14.5px;font-weight:400;color:#16202f;letter-spacing:0.549px;-webkit-text-stroke:0.17px">Total do Débito:</div>
<div class="t" id="t38" style="left:1002px;top:820px;font-size:14.5px;font-weight:400;color:#2a3342;letter-spacing:0.255px">0,00</div>
<div class="t" id="t39" style="left:1139px;top:820px;font-size:14.5px;font-weight:400;color:#16202f;letter-spacing:0.650px;-webkit-text-stroke:0.17px">Total do Crédito:</div>
<div class="t" id="t40" style="left:1260px;top:820px;font-size:14.5px;font-weight:400;color:#2a3342;letter-spacing:0.255px">0,00</div>
<div class="t" id="t41" style="left:1417px;top:820px;font-size:14.5px;font-weight:400;color:#16202f;letter-spacing:0.434px;-webkit-text-stroke:0.17px">Diferença:</div>
<div class="t" id="t42" style="left:1492px;top:820px;font-size:14.5px;font-weight:400;color:#2a3342;letter-spacing:-0.078px">0,00</div>
<div class="t" id="t43" style="left:293px;top:870px;font-size:15px;font-weight:400;color:#1b2433;letter-spacing:0.509px;-webkit-text-stroke:0.17px">30 / Página</div>
<div class="t" id="t44" style="left:506px;top:870px;font-size:15px;font-weight:400;color:#1b2433;letter-spacing:-0.344px;-webkit-text-stroke:0.17px">0</div>
<div class="t" id="t45" style="left:548px;top:870px;font-size:15px;font-weight:400;color:#1b2433;letter-spacing:1.156px;-webkit-text-stroke:0.17px">/ 0</div>
</div>
</body>
</html>
